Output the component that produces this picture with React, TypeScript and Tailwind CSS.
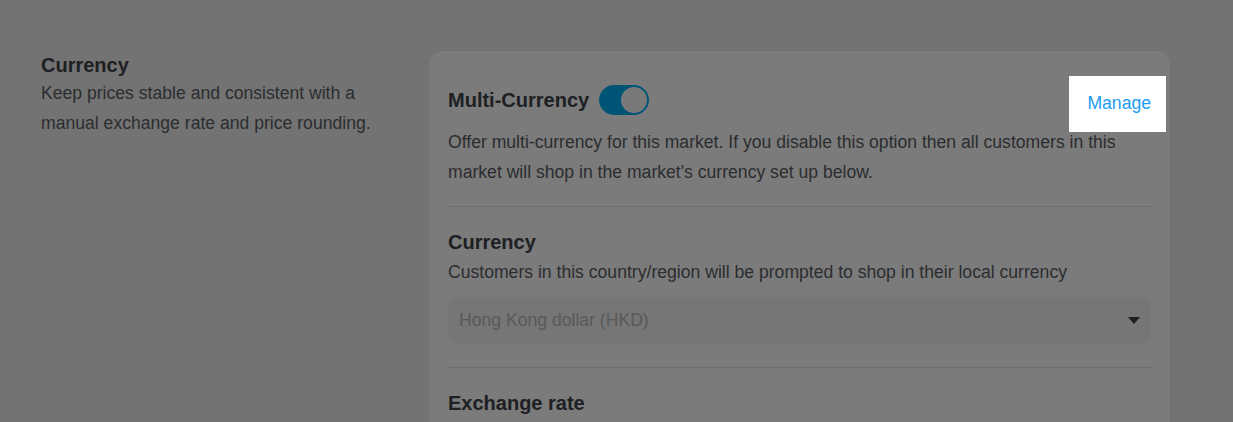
const Toggle = () => (
  <span className="inline-flex h-[30px] w-[50px] items-center justify-end rounded-full bg-[#00aaee] p-[2px]">
    <span className="h-[26px] w-[26px] rounded-full bg-[#f2f2f2]" />
  </span>
);

const Divider = () => <div className="h-px bg-[#d8d8d8]" />;

const App = () => {
  return (
    <div className="relative h-screen overflow-hidden bg-[#e7e7e7] font-['Liberation_Sans',Arial,sans-serif] text-[17.6px] text-[#585b60]">
      <div className="flex pl-[41px] pr-[62px] pt-[50px]">
        {/* Section intro */}
        <div className="w-[387px] shrink-0">
          <h2 className="pt-px text-[20px] font-bold leading-[28px] text-[#3d4147]">Currency</h2>
          <p className="-mt-px leading-[30px]">
            Keep prices stable and consistent with a
            <br />
            manual exchange rate and price rounding.
          </p>
        </div>

        {/* Card */}
        <div className="flex-1 rounded-[14px] border border-[#e0e0e0] bg-[#f6f6f6] px-[19px] pt-[32px] pb-8">
          <div className="flex items-center justify-between">
            <div className="flex items-center gap-[10px]">
              <h3 className="text-[20px] font-bold leading-[28px] text-[#3d4147]">Multi-Currency</h3>
              <Toggle />
            </div>
            <span className="relative z-20 mt-[6px] leading-[28px] text-[#1b9cf2]">
              <span className="absolute -left-[18px] -right-[15px] -top-[13px] -bottom-[15px] -z-10 bg-white" />
              Manage
            </span>
          </div>
          <p className="mt-[10px] mb-[19px] leading-[30px]">
            Offer multi-currency for this market. If you disable this option then all customers in this
            <br />
            market will shop in the market's currency set up below.
          </p>
          <Divider />

          <div className="pt-[21px] pb-[23px]">
            <h3 className="text-[20px] font-bold leading-[28px] text-[#3d4147]">Currency</h3>
            <p className="mt-px leading-[30px]">
              Customers in this country/region will be prompted to shop in their local currency
            </p>
            <div className="mt-[10px] flex h-[47px] items-center justify-between rounded-[10px] bg-[#ececec] pl-[11px] pr-[11px]">
              <span className="text-[#b3b3b3]">Hong Kong dollar (HKD)</span>
              <svg width="12" height="7" viewBox="0 0 12 7">
                <path d="M0 0h12L6 7z" fill="#3d4147" />
              </svg>
            </div>
          </div>
          <Divider />

          <div className="pt-[21px]">
            <h3 className="text-[20px] font-bold leading-[28px] text-[#3d4147]">Exchange rate</h3>
          </div>
        </div>
      </div>

      {/* Dimming overlay for the walkthrough */}
      <div className="pointer-events-none fixed inset-0 z-10 bg-black/50" />
    </div>
  );
};

export default App;
